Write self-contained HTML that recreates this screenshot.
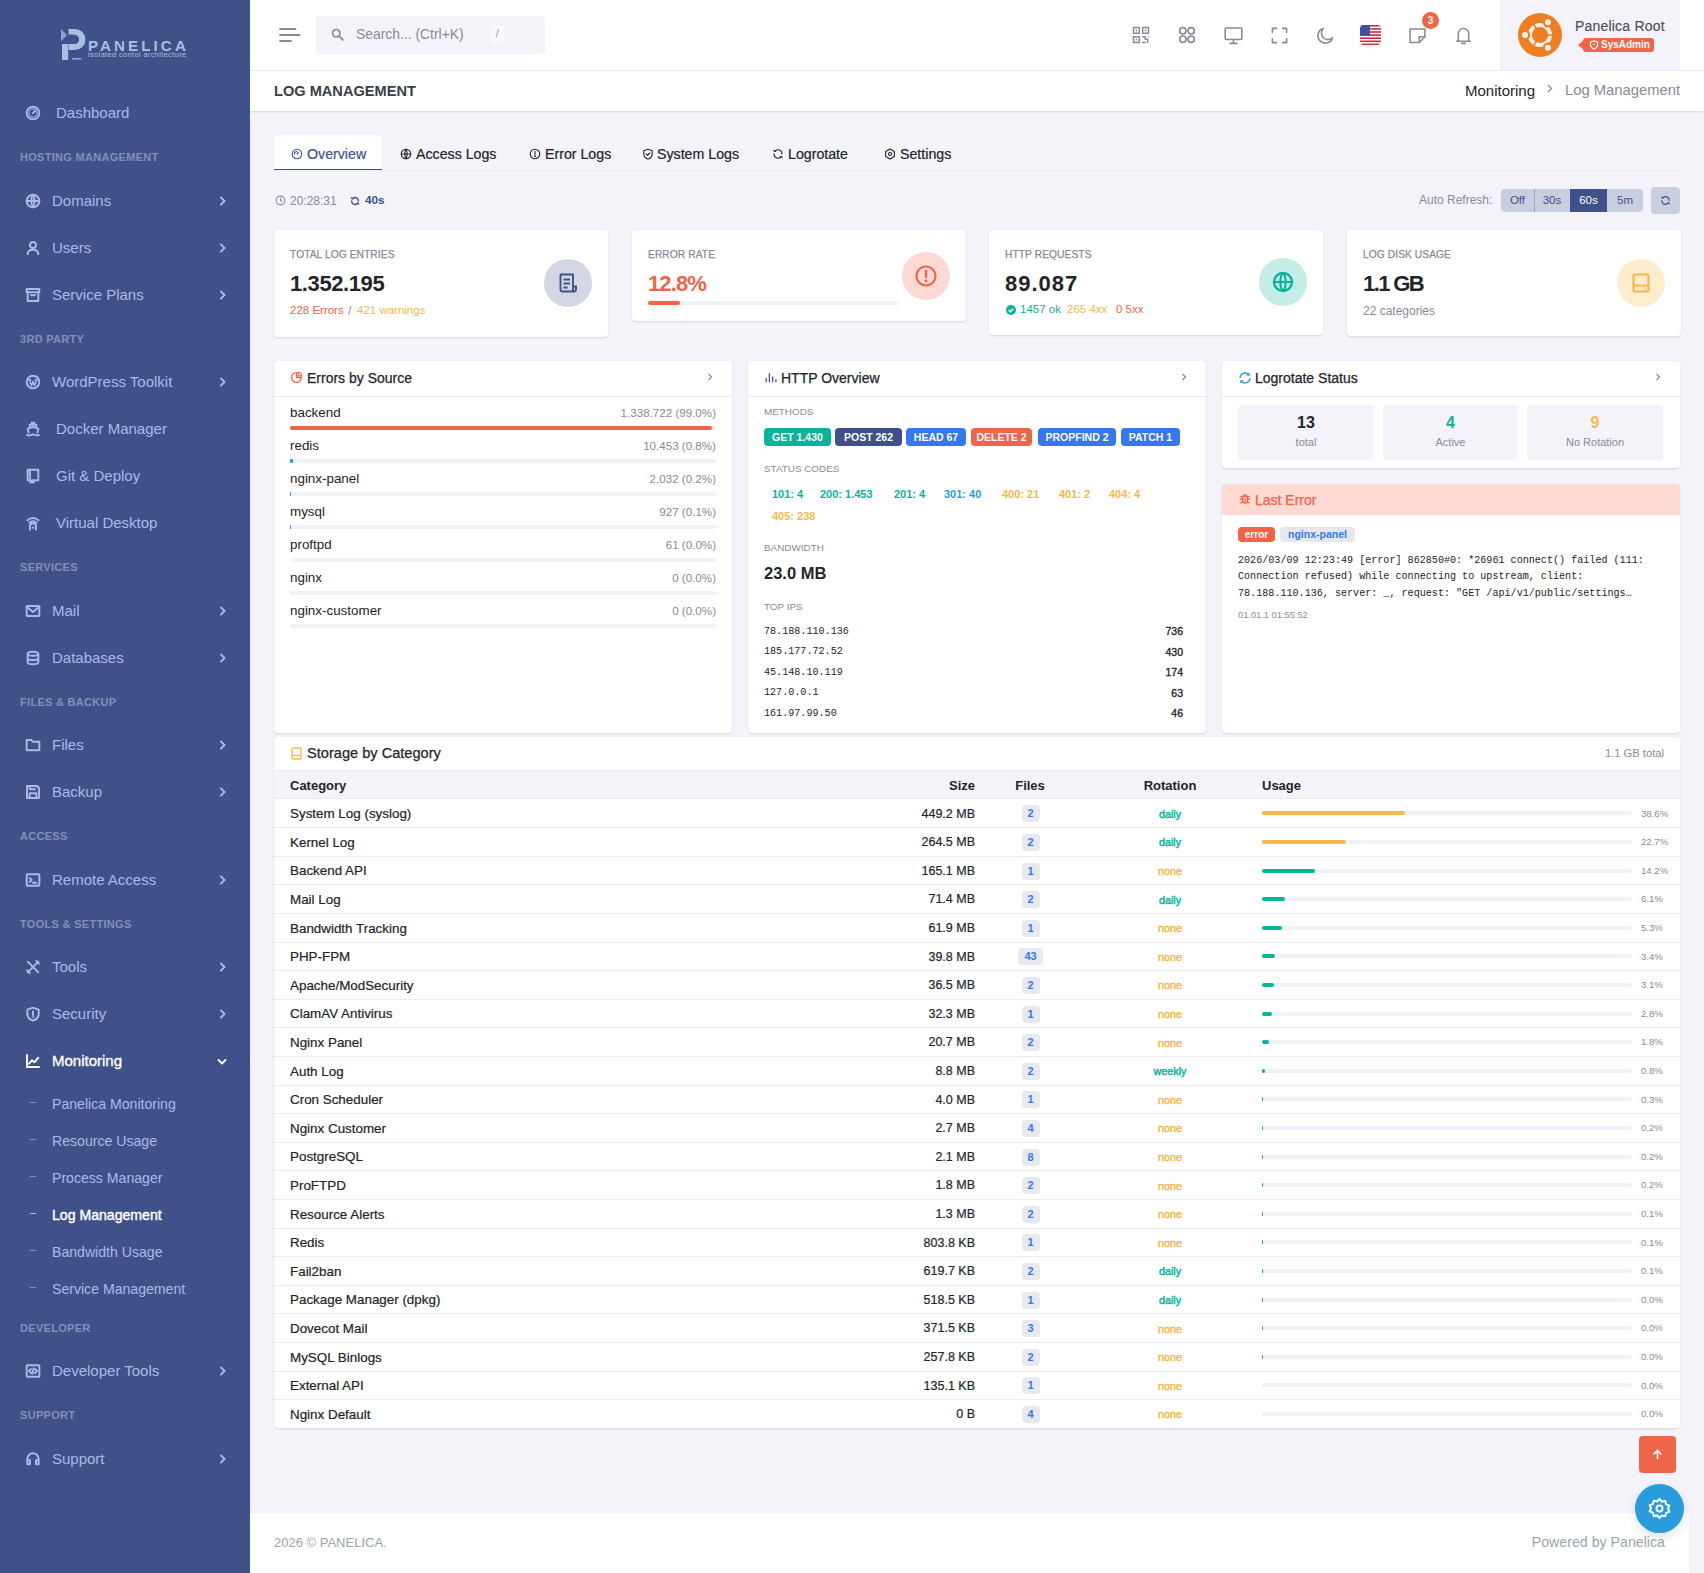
<!DOCTYPE html><html><head><meta charset="utf-8"><title>Log Management</title><style>*{box-sizing:border-box;margin:0;padding:0}
html,body{width:1704px;height:1573px;overflow:hidden}
body{font-family:"Liberation Sans",sans-serif;background:#f3f3f9;color:#212529;position:relative;font-size:13px}
svg{display:block}
.abs{position:absolute}
.t{position:absolute;white-space:nowrap;line-height:1}
/* sidebar */
#sb{position:absolute;left:0;top:0;width:250px;height:1573px;background:#405189}
.mi{position:absolute;left:0;width:250px;height:20px;color:#abb9e8;font-size:15px}
.mi .ic{position:absolute;left:25px;top:2px;width:16px;height:16px}
.mi .lb{position:absolute;top:2px;line-height:16px;white-space:nowrap}
.mi .ch{position:absolute;left:219px;top:4.5px;width:8px;height:10px}
.mt{position:absolute;left:20px;color:#838fb9;font-size:11px;font-weight:bold;letter-spacing:.3px;line-height:1;white-space:nowrap}
.si{position:absolute;left:0;width:250px;color:#abb9e8;font-size:14.1px;line-height:16px;white-space:nowrap}
.si .d{position:absolute;left:30px;top:5.5px;width:6px;height:1.3px;background:#abb9e8;opacity:.6}
.si span{position:absolute;left:52px;top:0}
/* header */
#hd{position:absolute;left:250px;top:0;width:1454px;height:71px;background:#fff;border-bottom:1px solid #eceef1}
#pt{position:absolute;left:250px;top:71px;width:1454px;height:40px;background:#fff;box-shadow:0 1px 2px rgba(56,65,74,.15)}
.card{position:absolute;background:#fff;border-radius:4px;box-shadow:0 1px 2px rgba(56,65,74,.15)}
.lbl{position:absolute;font-size:11px;color:#878a99;white-space:nowrap;line-height:1;text-transform:uppercase}
.bar{position:absolute;height:4px;border-radius:2px;background:#eff2f7}
.bar i{position:absolute;left:0;top:0;height:4px;border-radius:2px;display:block}
.bdg{position:absolute;height:18px;border-radius:4px;color:#fff;font-size:11px;font-weight:bold;line-height:18px;text-align:center;white-space:nowrap}
.mono{font-family:"Liberation Mono",monospace}
</style></head><body><div id="sb"><div class="abs" style="left:50px;top:20px;width:150px;height:50px">
<svg width="150" height="50" viewBox="50 20 150 50">
<path d="M61 29l6 6-6 6.5z" fill="#8d9fd6"/>
<rect x="62" y="44" width="6.2" height="16" fill="#a5c0e0"/>
<path d="M68.5 29h6.5a10.5 10.5 0 0 1 0 21h-6.5v-6h6a4.6 4.6 0 0 0 0-9.2h-1v-0.3h-5z" fill="#a5c0e0"/>
<rect x="72" y="58" width="9.5" height="1.5" fill="#a5c0e0" opacity=".8"/>
</svg>
<div class="t" style="left:38px;top:18px;font-size:15.2px;font-weight:bold;color:#a5c0e0;letter-spacing:3.05px">PANELICA</div>
<div class="t" style="left:38px;top:30.5px;font-size:7.3px;color:#a5c0e0;letter-spacing:.42px">isolated contol architecture</div>
</div><div class="mi" style="top:103px;color:#abb9e8"><div class="ic"><svg width="16" height="16" viewBox="0 0 24 24" fill="none" stroke="currentColor" stroke-width="2.9" stroke-linecap="round" stroke-linejoin="round" ><circle cx="12" cy="12" r="9.5"/><circle cx="12" cy="12" r="6" stroke-width="1.6"/><path d="M12 12l3.5-3.5"/></svg></div><div class="lb" style="left:56px">Dashboard</div></div><div class="mt" style="top:152px">HOSTING MANAGEMENT</div><div class="mi" style="top:191px;color:#abb9e8"><div class="ic"><svg width="16" height="16" viewBox="0 0 24 24" fill="none" stroke="currentColor" stroke-width="2.9" stroke-linecap="round" stroke-linejoin="round" ><circle cx="12" cy="12" r="9.5"/><path d="M2.5 12h19M12 2.5c3 3 3 16 0 19M12 2.5c-3 3-3 16 0 19"/></svg></div><div class="lb" style="left:52px">Domains</div><div class="ch"><svg width="8" height="10" viewBox="0 0 8 10"><path d="M2 1.5l3.5 3.5L2 8.5" fill="none" stroke="#abb9e8" stroke-width="1.9" stroke-linecap="round"/></svg></div></div><div class="mi" style="top:238px;color:#abb9e8"><div class="ic"><svg width="16" height="16" viewBox="0 0 24 24" fill="none" stroke="currentColor" stroke-width="2.9" stroke-linecap="round" stroke-linejoin="round" ><circle cx="12" cy="7.5" r="4.5"/><path d="M4 21.5c0-4.5 3.5-7 8-7s8 2.5 8 7"/></svg></div><div class="lb" style="left:52px">Users</div><div class="ch"><svg width="8" height="10" viewBox="0 0 8 10"><path d="M2 1.5l3.5 3.5L2 8.5" fill="none" stroke="#abb9e8" stroke-width="1.9" stroke-linecap="round"/></svg></div></div><div class="mi" style="top:285px;color:#abb9e8"><div class="ic"><svg width="16" height="16" viewBox="0 0 24 24" fill="none" stroke="currentColor" stroke-width="2.9" stroke-linecap="round" stroke-linejoin="round" ><rect x="2.5" y="3" width="19" height="5" /><path d="M4 8v13h16V8M9 12.5h6"/></svg></div><div class="lb" style="left:52px">Service Plans</div><div class="ch"><svg width="8" height="10" viewBox="0 0 8 10"><path d="M2 1.5l3.5 3.5L2 8.5" fill="none" stroke="#abb9e8" stroke-width="1.9" stroke-linecap="round"/></svg></div></div><div class="mt" style="top:334px">3RD PARTY</div><div class="mi" style="top:372px;color:#abb9e8"><div class="ic"><svg width="16" height="16" viewBox="0 0 24 24" fill="none" stroke="currentColor" stroke-width="2.9" stroke-linecap="round" stroke-linejoin="round" ><circle cx="12" cy="12" r="9.5"/><path d="M6.5 8.5l3.2 9 2.3-6.5 2.3 6.5 3.2-9M5.5 8.5h3M15.5 8.5h3" stroke-width="2.2"/></svg></div><div class="lb" style="left:52px">WordPress Toolkit</div><div class="ch"><svg width="8" height="10" viewBox="0 0 8 10"><path d="M2 1.5l3.5 3.5L2 8.5" fill="none" stroke="#abb9e8" stroke-width="1.9" stroke-linecap="round"/></svg></div></div><div class="mi" style="top:419px;color:#abb9e8"><div class="ic"><svg width="16" height="16" viewBox="0 0 24 24" fill="none" stroke="currentColor" stroke-width="2.9" stroke-linecap="round" stroke-linejoin="round" ><path d="M3 21c2 1 4 1 6 0s4-1 6 0 4 1 6 0M5.5 17.5L4 11.5l8-2.5 8 2.5-1.5 6M7 10V5.5h10V10M10 5.5V2.5h4v3"/></svg></div><div class="lb" style="left:56px">Docker Manager</div></div><div class="mi" style="top:466px;color:#abb9e8"><div class="ic"><svg width="16" height="16" viewBox="0 0 24 24" fill="none" stroke="currentColor" stroke-width="2.9" stroke-linecap="round" stroke-linejoin="round" ><path d="M4 2.5h16v16H4zM7.5 5v2M7.5 9v2M7.5 13v2M8 18.5v3.5l2.5-1.5 2.5 1.5v-3.5"/></svg></div><div class="lb" style="left:56px">Git &amp; Deploy</div></div><div class="mi" style="top:513px;color:#abb9e8"><div class="ic"><svg width="16" height="16" viewBox="0 0 24 24" fill="none" stroke="currentColor" stroke-width="2.9" stroke-linecap="round" stroke-linejoin="round" ><path d="M3.5 8a12 12 0 0 1 17 0M6.5 11.5a8 8 0 0 1 11 0M7.5 22v-5a4.5 4.5 0 0 1 9 0v5M11.5 19h1"/></svg></div><div class="lb" style="left:56px">Virtual Desktop</div></div><div class="mt" style="top:562px">SERVICES</div><div class="mi" style="top:601px;color:#abb9e8"><div class="ic"><svg width="16" height="16" viewBox="0 0 24 24" fill="none" stroke="currentColor" stroke-width="2.9" stroke-linecap="round" stroke-linejoin="round" ><rect x="2.5" y="4.5" width="19" height="15" rx="1"/><path d="M2.5 5.5l9.5 8 9.5-8"/></svg></div><div class="lb" style="left:52px">Mail</div><div class="ch"><svg width="8" height="10" viewBox="0 0 8 10"><path d="M2 1.5l3.5 3.5L2 8.5" fill="none" stroke="#abb9e8" stroke-width="1.9" stroke-linecap="round"/></svg></div></div><div class="mi" style="top:648px;color:#abb9e8"><div class="ic"><svg width="16" height="16" viewBox="0 0 24 24" fill="none" stroke="currentColor" stroke-width="2.9" stroke-linecap="round" stroke-linejoin="round" ><ellipse cx="12" cy="5.5" rx="8" ry="3"/><path d="M4 5.5v13c0 1.7 3.6 3 8 3s8-1.3 8-3v-13M4 12c0 1.7 3.6 3 8 3s8-1.3 8-3"/></svg></div><div class="lb" style="left:52px">Databases</div><div class="ch"><svg width="8" height="10" viewBox="0 0 8 10"><path d="M2 1.5l3.5 3.5L2 8.5" fill="none" stroke="#abb9e8" stroke-width="1.9" stroke-linecap="round"/></svg></div></div><div class="mt" style="top:697px">FILES &amp; BACKUP</div><div class="mi" style="top:735px;color:#abb9e8"><div class="ic"><svg width="16" height="16" viewBox="0 0 24 24" fill="none" stroke="currentColor" stroke-width="2.9" stroke-linecap="round" stroke-linejoin="round" ><path d="M2.5 4.5h7l2 2.5h10v13h-19z"/></svg></div><div class="lb" style="left:52px">Files</div><div class="ch"><svg width="8" height="10" viewBox="0 0 8 10"><path d="M2 1.5l3.5 3.5L2 8.5" fill="none" stroke="#abb9e8" stroke-width="1.9" stroke-linecap="round"/></svg></div></div><div class="mi" style="top:782px;color:#abb9e8"><div class="ic"><svg width="16" height="16" viewBox="0 0 24 24" fill="none" stroke="currentColor" stroke-width="2.9" stroke-linecap="round" stroke-linejoin="round" ><path d="M3 3h15l3 3v15H3zM7 21v-7h10v7M7 3v5h8"/></svg></div><div class="lb" style="left:52px">Backup</div><div class="ch"><svg width="8" height="10" viewBox="0 0 8 10"><path d="M2 1.5l3.5 3.5L2 8.5" fill="none" stroke="#abb9e8" stroke-width="1.9" stroke-linecap="round"/></svg></div></div><div class="mt" style="top:831px">ACCESS</div><div class="mi" style="top:870px;color:#abb9e8"><div class="ic"><svg width="16" height="16" viewBox="0 0 24 24" fill="none" stroke="currentColor" stroke-width="2.9" stroke-linecap="round" stroke-linejoin="round" ><rect x="2.5" y="3.5" width="19" height="17" rx="1"/><path d="M7 9l3 3-3 3M12 16h5"/></svg></div><div class="lb" style="left:52px">Remote Access</div><div class="ch"><svg width="8" height="10" viewBox="0 0 8 10"><path d="M2 1.5l3.5 3.5L2 8.5" fill="none" stroke="#abb9e8" stroke-width="1.9" stroke-linecap="round"/></svg></div></div><div class="mt" style="top:919px">TOOLS &amp; SETTINGS</div><div class="mi" style="top:957px;color:#abb9e8"><div class="ic"><svg width="16" height="16" viewBox="0 0 24 24" fill="none" stroke="currentColor" stroke-width="2.9" stroke-linecap="round" stroke-linejoin="round" ><path d="M4 4l16 16M4 20l7-7M14 10l6-6M17 3l4 4M3 17l4 4"/></svg></div><div class="lb" style="left:52px">Tools</div><div class="ch"><svg width="8" height="10" viewBox="0 0 8 10"><path d="M2 1.5l3.5 3.5L2 8.5" fill="none" stroke="#abb9e8" stroke-width="1.9" stroke-linecap="round"/></svg></div></div><div class="mi" style="top:1004px;color:#abb9e8"><div class="ic"><svg width="16" height="16" viewBox="0 0 24 24" fill="none" stroke="currentColor" stroke-width="2.9" stroke-linecap="round" stroke-linejoin="round" ><path d="M12 2.5l8.5 3v6c0 5-3.5 9-8.5 10.5C7 20.5 3.5 16.5 3.5 11.5v-6z"/><path d="M12 8v5"/><circle cx="12" cy="16" r=".6"/></svg></div><div class="lb" style="left:52px">Security</div><div class="ch"><svg width="8" height="10" viewBox="0 0 8 10"><path d="M2 1.5l3.5 3.5L2 8.5" fill="none" stroke="#abb9e8" stroke-width="1.9" stroke-linecap="round"/></svg></div></div><div class="mi" style="top:1051px;color:#fff;-webkit-text-stroke:.35px #fff"><div class="ic"><svg width="16" height="16" viewBox="0 0 24 24" fill="none" stroke="currentColor" stroke-width="2.9" stroke-linecap="round" stroke-linejoin="round" ><path d="M3 3v18h18M6 16l4.5-5 3.5 3 6-7"/></svg></div><div class="lb" style="left:52px">Monitoring</div><div class="ch" style="left:217px;top:7px"><svg width="10" height="8" viewBox="0 0 10 8"><path d="M1.5 2l3.5 3.5L8.5 2" fill="none" stroke="#fff" stroke-width="1.8" stroke-linecap="round"/></svg></div></div><div class="si" style="top:1096px;color:#abb9e8;font-weight:normal;"><div class="d" style="background:#abb9e8"></div><span>Panelica Monitoring</span></div><div class="si" style="top:1133px;color:#abb9e8;font-weight:normal;"><div class="d" style="background:#abb9e8"></div><span>Resource Usage</span></div><div class="si" style="top:1170px;color:#abb9e8;font-weight:normal;"><div class="d" style="background:#abb9e8"></div><span>Process Manager</span></div><div class="si" style="top:1207px;color:#fff;font-weight:normal;-webkit-text-stroke:.4px #fff"><div class="d" style="background:#fff"></div><span>Log Management</span></div><div class="si" style="top:1244px;color:#abb9e8;font-weight:normal;"><div class="d" style="background:#abb9e8"></div><span>Bandwidth Usage</span></div><div class="si" style="top:1281px;color:#abb9e8;font-weight:normal;"><div class="d" style="background:#abb9e8"></div><span>Service Management</span></div><div class="mt" style="top:1323px">DEVELOPER</div><div class="mi" style="top:1361px;color:#abb9e8"><div class="ic"><svg width="16" height="16" viewBox="0 0 24 24" fill="none" stroke="currentColor" stroke-width="2.9" stroke-linecap="round" stroke-linejoin="round" ><rect x="2.5" y="3.5" width="19" height="17" rx="1"/><path d="M9 9l-3 3 3 3M15 9l3 3-3 3M13 8l-2 8"/></svg></div><div class="lb" style="left:52px">Developer Tools</div><div class="ch"><svg width="8" height="10" viewBox="0 0 8 10"><path d="M2 1.5l3.5 3.5L2 8.5" fill="none" stroke="#abb9e8" stroke-width="1.9" stroke-linecap="round"/></svg></div></div><div class="mt" style="top:1410px">SUPPORT</div><div class="mi" style="top:1449px;color:#abb9e8"><div class="ic"><svg width="16" height="16" viewBox="0 0 24 24" fill="none" stroke="currentColor" stroke-width="2.9" stroke-linecap="round" stroke-linejoin="round" ><path d="M3.5 18v-6a8.5 8.5 0 0 1 17 0v6M3.5 14h4v6h-4zM16.5 14h4v6h-4z"/></svg></div><div class="lb" style="left:52px">Support</div><div class="ch"><svg width="8" height="10" viewBox="0 0 8 10"><path d="M2 1.5l3.5 3.5L2 8.5" fill="none" stroke="#abb9e8" stroke-width="1.9" stroke-linecap="round"/></svg></div></div></div><div id="hd"></div><div id="pt"></div><div class="abs" style="left:279px;top:27px"><svg width="22" height="16" viewBox="0 0 22 16"><path d="M1 2h15.5M1 8h19.5M1 14h11" stroke="#878a99" stroke-width="1.8" stroke-linecap="round"/></svg></div><div class="abs" style="left:316px;top:16px;width:229px;height:38px;background:#f3f3f9;border-radius:4px"></div><div class="abs" style="left:330px;top:27px"><svg width="15" height="15" viewBox="0 0 24 24"><circle cx="10" cy="10" r="6" fill="none" stroke="#878a99" stroke-width="2.6"/><path d="M14.5 14.5l6 6" stroke="#878a99" stroke-width="2.8" stroke-linecap="round"/></svg></div><div class="t" style="left:356px;top:28.1px;font-size:13.9px;color:#878a99;font-weight:normal;">Search... (Ctrl+K)</div><div class="abs" style="left:491px;top:25px;width:13px;height:19px;background:#f9f9fc;border-radius:3px"></div><div class="t" style="left:497.5px;transform:translateX(-50%);top:29.0px;font-size:10px;color:#878a99;font-weight:normal;">/</div><div class="abs" style="left:1131.0px;top:25.0px;width:20px;height:20px"><svg width="20" height="20" viewBox="0 0 24 24" fill="none" stroke="#878a99" stroke-width="1.8" stroke-linecap="round" stroke-linejoin="round" ><rect x="3" y="3" width="7" height="7"/><rect x="14" y="3" width="7" height="7"/><rect x="3" y="14" width="7" height="7"/><rect x="5.5" y="5.5" width="2" height="2" fill="#878a99" stroke="none"/><rect x="16.5" y="5.5" width="2" height="2" fill="#878a99" stroke="none"/><rect x="5.5" y="16.5" width="2" height="2" fill="#878a99" stroke="none"/><path d="M14 14h3v3M21 14v0M14 21h3M20 17v4M17 17h3"/></svg></div><div class="abs" style="left:1177.0px;top:25.0px;width:20px;height:20px"><svg width="20" height="20" viewBox="0 0 24 24" fill="none" stroke="#878a99" stroke-width="2" stroke-linecap="round" stroke-linejoin="round" ><circle cx="7" cy="7" r="3.8"/><circle cx="17" cy="7" r="3.8"/><circle cx="7" cy="17" r="3.8"/><circle cx="17" cy="17" r="3.8"/></svg></div><div class="abs" style="left:1222.5px;top:24.5px;width:21px;height:21px"><svg width="21" height="21" viewBox="0 0 24 24" fill="none" stroke="#878a99" stroke-width="1.8" stroke-linecap="round" stroke-linejoin="round" ><rect x="2.5" y="3.5" width="19" height="13" rx="1"/><path d="M12 16.5v4M8 21h8"/></svg></div><div class="abs" style="left:1269.5px;top:25.5px;width:19px;height:19px"><svg width="19" height="19" viewBox="0 0 24 24" fill="none" stroke="#878a99" stroke-width="2" stroke-linecap="round" stroke-linejoin="round" ><path d="M3 8V3h5M16 3h5v5M21 16v5h-5M8 21H3v-5"/></svg></div><div class="abs" style="left:1314.5px;top:24.5px;width:21px;height:21px"><svg width="21" height="21" viewBox="0 0 24 24" fill="none" stroke="#878a99" stroke-width="1.8" stroke-linecap="round" stroke-linejoin="round" ><path d="M20 14.5A8.5 8.5 0 1 1 9.5 4 7 7 0 0 0 20 14.5z"/></svg></div><div class="abs" style="left:1360px;top:25px;width:21px;height:20px;border-radius:4px;overflow:hidden">
<svg width="21" height="20" viewBox="0 0 21 20"><rect width="21" height="20" fill="#fff"/>
<rect y="0" width="21" height="1.6" fill="#d8263a"/><rect y="3.1" width="21" height="1.6" fill="#d8263a"/><rect y="6.2" width="21" height="1.6" fill="#d8263a"/><rect y="9.3" width="21" height="1.6" fill="#d8263a"/><rect y="12.4" width="21" height="1.6" fill="#d8263a"/><rect y="15.5" width="21" height="1.6" fill="#d8263a"/><rect y="18.6" width="21" height="1.6" fill="#d8263a"/>
<rect width="10" height="10.5" fill="#3d4fa8"/></svg></div><div class="abs" style="left:1406.5px;top:24.5px;width:21px;height:21px"><svg width="21" height="21" viewBox="0 0 24 24" fill="none" stroke="#878a99" stroke-width="1.8" stroke-linecap="round" stroke-linejoin="round" ><path d="M3.5 4.5h17v9l-6.5 6.5h-10.5z"/><path d="M14 20v-6.5h6.5"/></svg></div><div class="abs" style="left:1422px;top:12px;width:17px;height:17px;border-radius:50%;background:#f06548;color:#fff;font-size:10px;font-weight:bold;text-align:center;line-height:17px">3</div><div class="abs" style="left:1452.5px;top:24.5px;width:21px;height:21px"><svg width="21" height="21" viewBox="0 0 24 24" fill="none" stroke="#878a99" stroke-width="1.8" stroke-linecap="round" stroke-linejoin="round" ><path d="M6 17V10a6 6 0 0 1 12 0v7l1.5 1.5h-15zM10 21h4"/></svg></div><div class="abs" style="left:1500px;top:0;width:180px;height:70px;background:#f3f3f9"></div><div class="abs" style="left:1517.5px;top:13px;width:44px;height:44px;border-radius:50%;background:#f07d22"><svg width="44" height="44" viewBox="0 0 44 44">
<circle cx="22" cy="22" r="10" fill="none" stroke="#fdf3ea" stroke-width="4"/><line x1="22" y1="22" x2="15.00" y2="34.12" stroke="#f07d22" stroke-width="1.6"/><line x1="22" y1="22" x2="36.00" y2="22.00" stroke="#f07d22" stroke-width="1.6"/><line x1="22" y1="22" x2="15.00" y2="9.88" stroke="#f07d22" stroke-width="1.6"/><circle cx="7.00" cy="22.00" r="5.2" fill="#f07d22"/><circle cx="29.95" cy="9.28" r="5.2" fill="#f07d22"/><circle cx="29.95" cy="34.72" r="5.2" fill="#f07d22"/><circle cx="7.00" cy="22.00" r="3" fill="#fdf3ea"/><circle cx="29.95" cy="9.28" r="3" fill="#fdf3ea"/><circle cx="29.95" cy="34.72" r="3" fill="#fdf3ea"/></svg></div><div class="t" style="left:1575px;top:18.5px;font-size:14px;color:#495057;font-weight:normal;letter-spacing:.2px;-webkit-text-stroke:.15px #495057">Panelica Root</div><div class="abs" style="left:1583px;top:38px;width:71px;height:14px;background:#f06548;border-radius:3px"></div><div class="abs" style="left:1578px;top:40px;width:0;height:0;border-top:5px solid transparent;border-bottom:5px solid transparent;border-right:6px solid #f06548"></div><div class="abs" style="left:1589px;top:40px"><svg width="10" height="10" viewBox="0 0 24 24"><path d="M12 2l8.5 3v6c0 5-3.5 9-8.5 11C7 20 3.5 16 3.5 11V5z" fill="none" stroke="#fff" stroke-width="3"/><circle cx="12" cy="10.5" r="2" fill="#fff"/></svg></div><div class="t" style="left:1601px;top:40.0px;font-size:10px;color:#fff;font-weight:bold;">SysAdmin</div><div class="t" style="left:274px;top:83.7px;font-size:14.6px;color:#3a3f45;font-weight:bold;">LOG MANAGEMENT</div><div class="t" style="left:1465px;top:82.5px;font-size:15px;color:#212529;font-weight:normal;">Monitoring</div><div class="abs" style="left:1546px;top:84px"><svg width="8" height="9" viewBox="0 0 8 9"><path d="M2 1l3.5 3.5L2 8" fill="none" stroke="#878a99" stroke-width="1.3"/></svg></div><div class="t" style="left:1565px;top:82.6px;font-size:14.8px;color:#878a99;font-weight:normal;">Log Management</div><div class="abs" style="left:274px;top:170px;width:1406px;height:1px;background:#e9ebec"></div><div class="abs" style="left:274px;top:135px;width:108px;height:35px;background:#fff;border-radius:4px 4px 0 0;border-bottom:1.5px solid #405189"></div><div class="abs" style="left:291px;top:148px;color:#405189"><svg width="12" height="12" viewBox="0 0 24 24" fill="none" stroke="currentColor" stroke-width="2.2" stroke-linecap="round" stroke-linejoin="round" ><circle cx="12" cy="12" r="9.5"/><path d="M12 12l3-3"/><path d="M7 12a5 5 0 0 1 5-5"/></svg></div><div class="t" style="left:307px;top:146.9px;font-size:14.2px;color:#405189;font-weight:normal;-webkit-text-stroke:.2px #405189">Overview</div><div class="abs" style="left:400px;top:148px;color:#212529"><svg width="12" height="12" viewBox="0 0 24 24" fill="none" stroke="currentColor" stroke-width="2.2" stroke-linecap="round" stroke-linejoin="round" ><circle cx="12" cy="12" r="9.5"/><path d="M2.5 12h19M12 2.5c3 3 3 16 0 19M12 2.5c-3 3-3 16 0 19"/></svg></div><div class="t" style="left:416px;top:146.9px;font-size:14.2px;color:#212529;font-weight:normal;-webkit-text-stroke:.2px #212529">Access Logs</div><div class="abs" style="left:529px;top:148px;color:#212529"><svg width="12" height="12" viewBox="0 0 24 24" fill="none" stroke="currentColor" stroke-width="2.2" stroke-linecap="round" stroke-linejoin="round" ><circle cx="12" cy="12" r="9.5"/><path d="M12 7v6"/><circle cx="12" cy="16.5" r=".8" fill="currentColor"/></svg></div><div class="t" style="left:545px;top:146.9px;font-size:14.2px;color:#212529;font-weight:normal;-webkit-text-stroke:.2px #212529">Error Logs</div><div class="abs" style="left:642px;top:148px;color:#212529"><svg width="12" height="12" viewBox="0 0 24 24" fill="none" stroke="currentColor" stroke-width="2.2" stroke-linecap="round" stroke-linejoin="round" ><path d="M12 2.5l8.5 3v6c0 5-3.5 9-8.5 10.5C7 20.5 3.5 16.5 3.5 11.5v-6z"/><path d="M8.5 12l2.5 2.5 4.5-4.5"/></svg></div><div class="t" style="left:657px;top:146.9px;font-size:14.2px;color:#212529;font-weight:normal;-webkit-text-stroke:.2px #212529">System Logs</div><div class="abs" style="left:772px;top:148px;color:#212529"><svg width="12" height="12" viewBox="0 0 24 24" fill="none" stroke="currentColor" stroke-width="2.2" stroke-linecap="round" stroke-linejoin="round" ><path d="M5.5 7A8 8 0 0 1 20 12M18.5 17A8 8 0 0 1 4 12"/><path d="M3.5 4.5l2 2.5 2.7-1.6M20.5 19.5l-2-2.5-2.7 1.6"/></svg></div><div class="t" style="left:788px;top:146.9px;font-size:14.2px;color:#212529;font-weight:normal;-webkit-text-stroke:.2px #212529">Logrotate</div><div class="abs" style="left:884px;top:148px;color:#212529"><svg width="12" height="12" viewBox="0 0 24 24" fill="none" stroke="currentColor" stroke-width="2.2" stroke-linecap="round" stroke-linejoin="round" ><circle cx="12" cy="12" r="3"/><path d="M12 2l8.7 5v10L12 22l-8.7-5V7z"/></svg></div><div class="t" style="left:900px;top:146.9px;font-size:14.2px;color:#212529;font-weight:normal;-webkit-text-stroke:.2px #212529">Settings</div><div class="abs" style="left:274.5px;top:195px;color:#878a99"><svg width="11" height="11" viewBox="0 0 24 24" fill="none" stroke="currentColor" stroke-width="2.3" stroke-linecap="round" stroke-linejoin="round" ><circle cx="12" cy="12" r="9.5"/><path d="M12 7v5l3 2"/></svg></div><div class="t" style="left:290px;top:195.0px;font-size:12px;color:#878a99;font-weight:normal;">20:28:31</div><div class="abs" style="left:350px;top:195.5px;color:#405189"><svg width="10" height="10" viewBox="0 0 24 24" fill="none" stroke="currentColor" stroke-width="3.2" stroke-linecap="round" stroke-linejoin="round" ><path d="M5.5 7A8 8 0 0 1 20 12M18.5 17A8 8 0 0 1 4 12"/><path d="M3.5 4.5l2 2.5 2.7-1.6M20.5 19.5l-2-2.5-2.7 1.6"/></svg></div><div class="t" style="left:365px;top:195.1px;font-size:11.8px;color:#405189;font-weight:bold;">40s</div><div class="t" style="left:1419px;top:194.0px;font-size:12px;color:#878a99;font-weight:normal;">Auto Refresh:</div><div class="abs" style="left:1501px;top:189px;width:142px;height:23px;background:#c9cfe1;border-radius:4px;overflow:hidden"><div class="abs" style="left:33px;top:0;width:1px;height:23px;background:#9aa3bf"></div><div class="abs" style="left:69px;top:0;width:37px;height:23px;background:#405189"></div></div><div class="t" style="left:1517.5px;transform:translateX(-50%);top:194.8px;font-size:11.5px;color:#405189;font-weight:normal;">Off</div><div class="t" style="left:1552px;transform:translateX(-50%);top:194.8px;font-size:11.5px;color:#405189;font-weight:normal;">30s</div><div class="t" style="left:1588.5px;transform:translateX(-50%);top:194.8px;font-size:11.5px;color:#fff;font-weight:normal;">60s</div><div class="t" style="left:1625px;transform:translateX(-50%);top:194.8px;font-size:11.5px;color:#405189;font-weight:normal;">5m</div><div class="abs" style="left:1651px;top:187px;width:29px;height:27px;background:#c9cfe1;border-radius:4px"></div><div class="abs" style="left:1660px;top:195px;color:#405189"><svg width="11" height="11" viewBox="0 0 24 24" fill="none" stroke="currentColor" stroke-width="2.4" stroke-linecap="round" stroke-linejoin="round" ><path d="M5.5 7A8 8 0 0 1 20 12M18.5 17A8 8 0 0 1 4 12"/><path d="M3.5 4.5l2 2.5 2.7-1.6M20.5 19.5l-2-2.5-2.7 1.6"/></svg></div><div class="card" style="left:274px;top:230px;width:334px;height:107px"></div><div class="t" style="left:290px;top:249.9px;font-size:10.2px;color:#878a99;font-weight:normal;letter-spacing:.1px;-webkit-text-stroke:.25px #878a99">TOTAL LOG ENTRIES</div><div class="t" style="left:290px;top:273.0px;font-size:22px;color:#212529;font-weight:bold;letter-spacing:-0.4px">1.352.195</div><div class="abs" style="left:544px;top:259px;width:48px;height:48px;border-radius:50%;background:#d3d7e4"><svg width="48" height="48" viewBox="0 0 48 48"><path d="M16.5 15.5h12.5v17h-11a1.5 1.5 0 0 1-1.5-1.5z" fill="none" stroke="#405189" stroke-width="1.9" stroke-linejoin="round"/><path d="M19.5 20.5h6.5M19.5 24.5h6.5M19.5 28.5h4" stroke="#405189" stroke-width="1.9"/><path d="M29 27.5h3v3a2 2 0 0 1-2 2h-1" fill="none" stroke="#405189" stroke-width="1.9"/></svg></div><div class="t" style="left:290px;top:305.2px;font-size:11.5px;color:#f06548;font-weight:normal;">228 Errors</div><div class="t" style="left:348px;top:305.0px;font-size:12px;color:#878a99;font-weight:normal;">/</div><div class="t" style="left:357px;top:305.2px;font-size:11.5px;color:#f7b84b;font-weight:normal;">421 warnings</div><div class="card" style="left:632px;top:230px;width:334px;height:91px"></div><div class="t" style="left:648px;top:249.9px;font-size:10.2px;color:#878a99;font-weight:normal;letter-spacing:.1px;-webkit-text-stroke:.25px #878a99">ERROR RATE</div><div class="t" style="left:648px;top:273.0px;font-size:22px;color:#f06548;font-weight:bold;letter-spacing:-0.9px">12.8%</div><div class="abs" style="left:902px;top:252px;width:48px;height:48px;border-radius:50%;background:#fcd9d2"><svg width="48" height="48" viewBox="0 0 48 48"><circle cx="24" cy="24" r="9.5" fill="none" stroke="#f06548" stroke-width="2.2"/><path d="M24 19v6" stroke="#f06548" stroke-width="2.4" stroke-linecap="round"/><circle cx="24" cy="29" r="1.4" fill="#f06548"/></svg></div><div class="abs" style="left:648px;top:301px;width:252px;height:4px;background:#eff2f7;border-radius:2px"><div class="abs" style="left:0;top:0;width:32px;height:4px;background:#f06548;border-radius:2px"></div></div><div class="card" style="left:989px;top:230px;width:334px;height:105px"></div><div class="t" style="left:1005px;top:249.9px;font-size:10.2px;color:#878a99;font-weight:normal;letter-spacing:.1px;-webkit-text-stroke:.25px #878a99">HTTP REQUESTS</div><div class="t" style="left:1005px;top:273.0px;font-size:22px;color:#212529;font-weight:bold;letter-spacing:1.0px">89.087</div><div class="abs" style="left:1259px;top:258px;width:48px;height:48px;border-radius:50%;background:#c3ede6"><svg width="48" height="48" viewBox="0 0 48 48"><circle cx="24" cy="24" r="9" fill="none" stroke="#0ab39c" stroke-width="2.4"/><path d="M15 24h18M24 15c3.5 3 3.5 15 0 18M24 15c-3.5 3-3.5 15 0 18" fill="none" stroke="#0ab39c" stroke-width="2.2"/></svg></div><div class="abs" style="left:1005.5px;top:304.5px;width:10px;height:10px;border-radius:50%;background:#0ab39c"><svg width="10" height="10" viewBox="0 0 10 10"><path d="M2.7 5.1l1.6 1.6L7.3 3.7" fill="none" stroke="#fff" stroke-width="1.4"/></svg></div><div class="t" style="left:1020px;top:304.2px;font-size:11.5px;color:#0ab39c;font-weight:normal;">1457 ok</div><div class="t" style="left:1067px;top:304.2px;font-size:11.5px;color:#f7b84b;font-weight:normal;">265 4xx</div><div class="t" style="left:1116px;top:304.2px;font-size:11.5px;color:#f06548;font-weight:normal;">0 5xx</div><div class="card" style="left:1347px;top:230px;width:334px;height:106px"></div><div class="t" style="left:1363px;top:249.9px;font-size:10.2px;color:#878a99;font-weight:normal;letter-spacing:.1px;-webkit-text-stroke:.25px #878a99">LOG DISK USAGE</div><div class="t" style="left:1363px;top:273.0px;font-size:22px;color:#212529;font-weight:bold;letter-spacing:-1.6px">1.1 GB</div><div class="abs" style="left:1617px;top:259px;width:48px;height:48px;border-radius:50%;background:#fdeccd"><svg width="48" height="48" viewBox="0 0 48 48"><rect x="16.5" y="15.5" width="15" height="17" rx="1.5" fill="none" stroke="#f7b84b" stroke-width="2.2"/><path d="M16.5 26.5h15M27 29.5h1.5" stroke="#f7b84b" stroke-width="2"/></svg></div><div class="t" style="left:1363px;top:305.0px;font-size:12px;color:#878a99;font-weight:normal;">22 categories</div><div class="card" style="left:274px;top:361px;width:458px;height:372px"></div><div class="abs" style="left:274px;top:396px;width:458px;height:1px;background:#e9ebec"></div><div class="abs" style="left:290px;top:371px;width:14px;height:14px"><svg width="13" height="13" viewBox="0 0 24 24"><path d="M12 3a9 9 0 1 0 9 9h-9z" fill="none" stroke="#f06548" stroke-width="2.4"/><path d="M15 2.5a7 7 0 0 1 6.5 6.5H15z" fill="none" stroke="#f06548" stroke-width="2.2"/></svg></div><div class="t" style="left:307px;top:370.5px;font-size:14px;color:#212529;font-weight:normal;-webkit-text-stroke:.25px #212529">Errors by Source</div><div class="abs" style="left:707px;top:373px"><svg width="6" height="8" viewBox="0 0 6 8"><path d="M1.5 1l3 3-3 3" fill="none" stroke="#878a99" stroke-width="1.2"/></svg></div><div class="t" style="left:290px;top:406.3px;font-size:13.4px;color:#212529;font-weight:normal;">backend</div><div class="t" style="right:988px;top:407.2px;font-size:11.6px;color:#878a99;font-weight:normal;">1.338.722 (99.0%)</div><div class="abs" style="left:290px;top:426px;width:426px;height:4px;background:#eff2f7;border-radius:2px"><div class="abs" style="left:0;top:0;width:422px;height:4px;background:#f06548;border-radius:2px"></div></div><div class="t" style="left:290px;top:439.3px;font-size:13.4px;color:#212529;font-weight:normal;">redis</div><div class="t" style="right:988px;top:440.2px;font-size:11.6px;color:#878a99;font-weight:normal;">10.453 (0.8%)</div><div class="abs" style="left:290px;top:459px;width:426px;height:4px;background:#eff2f7;border-radius:2px"><div class="abs" style="left:0;top:0;width:3px;height:4px;background:#299cdb;border-radius:1px"></div></div><div class="t" style="left:290px;top:472.3px;font-size:13.4px;color:#212529;font-weight:normal;">nginx-panel</div><div class="t" style="right:988px;top:473.2px;font-size:11.6px;color:#878a99;font-weight:normal;">2.032 (0.2%)</div><div class="abs" style="left:290px;top:492px;width:426px;height:4px;background:#eff2f7;border-radius:2px"><div class="abs" style="left:0;top:0;width:1px;height:4px;background:#299cdb;border-radius:1px"></div></div><div class="t" style="left:290px;top:505.3px;font-size:13.4px;color:#212529;font-weight:normal;">mysql</div><div class="t" style="right:988px;top:506.2px;font-size:11.6px;color:#878a99;font-weight:normal;">927 (0.1%)</div><div class="abs" style="left:290px;top:525px;width:426px;height:4px;background:#eff2f7;border-radius:2px"><div class="abs" style="left:0;top:0;width:1px;height:4px;background:#299cdb;border-radius:1px"></div></div><div class="t" style="left:290px;top:538.3px;font-size:13.4px;color:#212529;font-weight:normal;">proftpd</div><div class="t" style="right:988px;top:539.2px;font-size:11.6px;color:#878a99;font-weight:normal;">61 (0.0%)</div><div class="abs" style="left:290px;top:558px;width:426px;height:4px;background:#eff2f7;border-radius:2px"><div class="abs" style="left:0;top:0;width:0px;height:4px;background:#299cdb;border-radius:1px"></div></div><div class="t" style="left:290px;top:571.3px;font-size:13.4px;color:#212529;font-weight:normal;">nginx</div><div class="t" style="right:988px;top:572.2px;font-size:11.6px;color:#878a99;font-weight:normal;">0 (0.0%)</div><div class="abs" style="left:290px;top:591px;width:426px;height:4px;background:#eff2f7;border-radius:2px"><div class="abs" style="left:0;top:0;width:0px;height:4px;background:#299cdb;border-radius:1px"></div></div><div class="t" style="left:290px;top:604.3px;font-size:13.4px;color:#212529;font-weight:normal;">nginx-customer</div><div class="t" style="right:988px;top:605.2px;font-size:11.6px;color:#878a99;font-weight:normal;">0 (0.0%)</div><div class="abs" style="left:290px;top:624px;width:426px;height:4px;background:#eff2f7;border-radius:2px"><div class="abs" style="left:0;top:0;width:0px;height:4px;background:#299cdb;border-radius:1px"></div></div><div class="card" style="left:748px;top:361px;width:458px;height:372px"></div><div class="abs" style="left:748px;top:396px;width:458px;height:1px;background:#e9ebec"></div><div class="abs" style="left:764px;top:371px;width:14px;height:14px"><svg width="13" height="13" viewBox="0 0 24 24"><path d="M4 20v-6M10 20V5M16 20v-9M22 20v-4" stroke="#405189" stroke-width="2.4" stroke-linecap="round"/></svg></div><div class="t" style="left:781px;top:370.5px;font-size:14px;color:#212529;font-weight:normal;-webkit-text-stroke:.25px #212529">HTTP Overview</div><div class="abs" style="left:1181px;top:373px"><svg width="6" height="8" viewBox="0 0 6 8"><path d="M1.5 1l3 3-3 3" fill="none" stroke="#878a99" stroke-width="1.2"/></svg></div><div class="t" style="left:764px;top:407.1px;font-size:9.9px;color:#878a99;font-weight:normal;">METHODS</div><div class="bdg" style="left:764px;top:428px;width:67px;background:#0ab39c;font-size:10.5px">GET 1.430</div><div class="bdg" style="left:835px;top:428px;width:67px;background:#405189;font-size:10.5px">POST 262</div><div class="bdg" style="left:906px;top:428px;width:60px;background:#3577f1;font-size:10.5px">HEAD 67</div><div class="bdg" style="left:971px;top:428px;width:61px;background:#f06548;font-size:10.5px">DELETE 2</div><div class="bdg" style="left:1038px;top:428px;width:78px;background:#3577f1;font-size:10.5px">PROPFIND 2</div><div class="bdg" style="left:1121px;top:428px;width:59px;background:#3577f1;font-size:10.5px">PATCH 1</div><div class="t" style="left:764px;top:464.1px;font-size:9.9px;color:#878a99;font-weight:normal;">STATUS CODES</div><div class="t" style="left:772px;top:488.5px;font-size:11px;color:#0ab39c;font-weight:bold;">101: 4</div><div class="t" style="left:820px;top:488.5px;font-size:11px;color:#0ab39c;font-weight:bold;">200: 1.453</div><div class="t" style="left:894px;top:488.5px;font-size:11px;color:#0ab39c;font-weight:bold;">201: 4</div><div class="t" style="left:944px;top:488.5px;font-size:11px;color:#299cdb;font-weight:bold;">301: 40</div><div class="t" style="left:1002px;top:488.5px;font-size:11px;color:#f7b84b;font-weight:bold;">400: 21</div><div class="t" style="left:1059px;top:488.5px;font-size:11px;color:#f7b84b;font-weight:bold;">401: 2</div><div class="t" style="left:1109px;top:488.5px;font-size:11px;color:#f7b84b;font-weight:bold;">404: 4</div><div class="t" style="left:772px;top:510.5px;font-size:11px;color:#f7b84b;font-weight:bold;">405: 238</div><div class="t" style="left:764px;top:543.0px;font-size:9.9px;color:#878a99;font-weight:normal;">BANDWIDTH</div><div class="t" style="left:764px;top:564.8px;font-size:16.5px;color:#212529;font-weight:bold;">23.0 MB</div><div class="t" style="left:764px;top:602.0px;font-size:9.9px;color:#878a99;font-weight:normal;">TOP IPS</div><div class="t" style="left:764px;top:626.5px;font-size:10.1px;color:#212529;font-weight:normal;font-family:'Liberation Mono',monospace;">78.188.110.136</div><div class="t" style="right:521px;top:626.2px;font-size:10.5px;color:#212529;font-weight:normal;-webkit-text-stroke:.35px #212529">736</div><div class="t" style="left:764px;top:647.0px;font-size:10.1px;color:#212529;font-weight:normal;font-family:'Liberation Mono',monospace;">185.177.72.52</div><div class="t" style="right:521px;top:646.8px;font-size:10.5px;color:#212529;font-weight:normal;-webkit-text-stroke:.35px #212529">430</div><div class="t" style="left:764px;top:667.5px;font-size:10.1px;color:#212529;font-weight:normal;font-family:'Liberation Mono',monospace;">45.148.10.119</div><div class="t" style="right:521px;top:667.2px;font-size:10.5px;color:#212529;font-weight:normal;-webkit-text-stroke:.35px #212529">174</div><div class="t" style="left:764px;top:688.0px;font-size:10.1px;color:#212529;font-weight:normal;font-family:'Liberation Mono',monospace;">127.0.0.1</div><div class="t" style="right:521px;top:687.8px;font-size:10.5px;color:#212529;font-weight:normal;-webkit-text-stroke:.35px #212529">63</div><div class="t" style="left:764px;top:708.5px;font-size:10.1px;color:#212529;font-weight:normal;font-family:'Liberation Mono',monospace;">161.97.99.50</div><div class="t" style="right:521px;top:708.2px;font-size:10.5px;color:#212529;font-weight:normal;-webkit-text-stroke:.35px #212529">46</div><div class="card" style="left:1222px;top:361px;width:458px;height:107px"></div><div class="abs" style="left:1222px;top:396px;width:458px;height:1px;background:#e9ebec"></div><div class="abs" style="left:1238px;top:371px;width:14px;height:14px"><svg width="14" height="14" viewBox="0 0 24 24"><path d="M20.5 12a8.5 8.5 0 0 1-15 5.5M3.5 12a8.5 8.5 0 0 1 15-5.5" fill="none" stroke="#299cdb" stroke-width="2.4"/><path d="M19 3v4h-4M5 21v-4h4" fill="none" stroke="#299cdb" stroke-width="2.2"/></svg></div><div class="t" style="left:1255px;top:370.5px;font-size:14px;color:#212529;font-weight:normal;-webkit-text-stroke:.25px #212529">Logrotate Status</div><div class="abs" style="left:1655px;top:373px"><svg width="6" height="8" viewBox="0 0 6 8"><path d="M1.5 1l3 3-3 3" fill="none" stroke="#878a99" stroke-width="1.2"/></svg></div><div class="abs" style="left:1238px;top:405px;width:136px;height:55px;background:#f3f3f9;border-radius:4px"></div><div class="t" style="left:1306.0px;transform:translateX(-50%);top:414.5px;font-size:16px;color:#212529;font-weight:bold;">13</div><div class="t" style="left:1306.0px;transform:translateX(-50%);top:436.5px;font-size:11px;color:#878a99;font-weight:normal;">total</div><div class="abs" style="left:1383px;top:405px;width:135px;height:55px;background:#f3f3f9;border-radius:4px"></div><div class="t" style="left:1450.5px;transform:translateX(-50%);top:414.5px;font-size:16px;color:#0ab39c;font-weight:bold;">4</div><div class="t" style="left:1450.5px;transform:translateX(-50%);top:436.5px;font-size:11px;color:#878a99;font-weight:normal;">Active</div><div class="abs" style="left:1527px;top:405px;width:136px;height:55px;background:#f3f3f9;border-radius:4px"></div><div class="t" style="left:1595.0px;transform:translateX(-50%);top:414.5px;font-size:16px;color:#f7b84b;font-weight:bold;">9</div><div class="t" style="left:1595.0px;transform:translateX(-50%);top:436.5px;font-size:11px;color:#878a99;font-weight:normal;">No Rotation</div><div class="card" style="left:1222px;top:484px;width:458px;height:249px;overflow:hidden"><div class="abs" style="left:0;top:0;width:458px;height:31px;background:#fcd9d2"></div></div><div class="abs" style="left:1238px;top:492px"><svg width="14" height="14" viewBox="0 0 24 24" fill="none" stroke="#f06548" stroke-width="2.2"><path d="M8 8h8v7a4 4 0 0 1-8 0z"/><path d="M9 8a3 3 0 0 1 6 0M3 12h5M16 12h5M4 7l4 2M20 7l-4 2M4 19l4-2M20 19l-4-2M12 11v7"/></svg></div><div class="t" style="left:1255px;top:492.5px;font-size:14px;color:#f06548;font-weight:normal;-webkit-text-stroke:.25px #f06548">Last Error</div><div class="bdg" style="left:1238px;top:527px;width:37px;height:15px;line-height:15px;background:#f06548;font-size:10px">error</div><div class="bdg" style="left:1280px;top:527px;width:75px;height:15px;line-height:15px;background:#e5e7eb;color:#3577f1;font-size:10.5px">nginx-panel</div><div class="t" style="left:1238px;top:555.5px;font-size:10.1px;color:#212529;font-weight:normal;font-family:'Liberation Mono',monospace;">2026/03/09 12:23:49 [error] 862850#0: *26961 connect() failed (111:</div><div class="t" style="left:1238px;top:572.0px;font-size:10.1px;color:#212529;font-weight:normal;font-family:'Liberation Mono',monospace;">Connection refused) while connecting to upstream, client:</div><div class="t" style="left:1238px;top:588.5px;font-size:10.1px;color:#212529;font-weight:normal;font-family:'Liberation Mono',monospace;">78.188.110.136, server: _, request: &quot;GET /api/v1/public/settings…</div><div class="t" style="left:1238px;top:611.4px;font-size:9.3px;color:#878a99;font-weight:normal;">01.01.1 01:55:52</div><div class="card" style="left:274px;top:737px;width:1406px;height:691px"></div><div class="abs" style="left:291px;top:747px"><svg width="11" height="13" viewBox="0 0 11 13"><rect x="1" y="1" width="9" height="11" rx="1" fill="none" stroke="#f7b84b" stroke-width="1.4"/><path d="M1 8.5h9" stroke="#f7b84b" stroke-width="1.3"/></svg></div><div class="t" style="left:307px;top:746.2px;font-size:14.6px;color:#212529;font-weight:normal;-webkit-text-stroke:.25px #212529">Storage by Category</div><div class="t" style="right:40px;top:747.9px;font-size:11.2px;color:#878a99;font-weight:normal;">1.1 GB total</div><div class="abs" style="left:274px;top:770px;width:1406px;height:29px;background:#f3f3f9;border-top:1px solid #e9ebec;border-bottom:1px solid #e9ebec"></div><div class="t" style="left:290px;top:778.5px;font-size:13px;color:#212529;font-weight:bold;">Category</div><div class="t" style="right:729px;top:778.5px;font-size:13px;color:#212529;font-weight:bold;">Size</div><div class="t" style="left:1030px;transform:translateX(-50%);top:778.5px;font-size:13px;color:#212529;font-weight:bold;">Files</div><div class="t" style="left:1170px;transform:translateX(-50%);top:778.5px;font-size:13px;color:#212529;font-weight:bold;">Rotation</div><div class="t" style="left:1262px;top:778.5px;font-size:13px;color:#212529;font-weight:bold;">Usage</div><div class="abs" style="left:274px;top:827px;width:1406px;height:1px;background:#e9ebec"></div><div class="t" style="left:290px;top:807.1px;font-size:13.4px;color:#212529;font-weight:normal;-webkit-text-stroke:.2px #212529">System Log (syslog)</div><div class="t" style="right:729px;top:807.5px;font-size:12.5px;color:#212529;font-weight:normal;-webkit-text-stroke:.2px #212529">449.2 MB</div><div class="abs" style="left:1021.5px;top:805.3px;width:18px;height:17px;background:#e7e9ee;border-radius:4px;color:#3577f1;font-size:11px;font-weight:bold;text-align:center;line-height:17px">2</div><div class="t" style="left:1170px;transform:translateX(-50%);top:808.7px;font-size:10.8px;color:#0ab39c;font-weight:normal;-webkit-text-stroke:.45px #0ab39c">daily</div><div class="abs" style="left:1262px;top:811.3px;width:370px;height:4px;background:#eff2f7;border-radius:2px"><div class="abs" style="left:0;top:0;width:142.8px;height:4px;background:#f7b84b;border-radius:2px"></div></div><div class="t" style="left:1641px;top:808.5px;font-size:9.6px;color:#878a99;font-weight:normal;">38.6%</div><div class="abs" style="left:274px;top:856px;width:1406px;height:1px;background:#e9ebec"></div><div class="t" style="left:290px;top:835.7px;font-size:13.4px;color:#212529;font-weight:normal;-webkit-text-stroke:.2px #212529">Kernel Log</div><div class="t" style="right:729px;top:836.1px;font-size:12.5px;color:#212529;font-weight:normal;-webkit-text-stroke:.2px #212529">264.5 MB</div><div class="abs" style="left:1021.5px;top:833.9px;width:18px;height:17px;background:#e7e9ee;border-radius:4px;color:#3577f1;font-size:11px;font-weight:bold;text-align:center;line-height:17px">2</div><div class="t" style="left:1170px;transform:translateX(-50%);top:837.3px;font-size:10.8px;color:#0ab39c;font-weight:normal;-webkit-text-stroke:.45px #0ab39c">daily</div><div class="abs" style="left:1262px;top:839.9px;width:370px;height:4px;background:#eff2f7;border-radius:2px"><div class="abs" style="left:0;top:0;width:84.0px;height:4px;background:#f7b84b;border-radius:2px"></div></div><div class="t" style="left:1641px;top:837.1px;font-size:9.6px;color:#878a99;font-weight:normal;">22.7%</div><div class="abs" style="left:274px;top:884px;width:1406px;height:1px;background:#e9ebec"></div><div class="t" style="left:290px;top:864.3px;font-size:13.4px;color:#212529;font-weight:normal;-webkit-text-stroke:.2px #212529">Backend API</div><div class="t" style="right:729px;top:864.8px;font-size:12.5px;color:#212529;font-weight:normal;-webkit-text-stroke:.2px #212529">165.1 MB</div><div class="abs" style="left:1021.5px;top:862.5px;width:18px;height:17px;background:#e7e9ee;border-radius:4px;color:#3577f1;font-size:11px;font-weight:bold;text-align:center;line-height:17px">1</div><div class="t" style="left:1170px;transform:translateX(-50%);top:865.9px;font-size:10.8px;color:#f7b84b;font-weight:normal;-webkit-text-stroke:.45px #f7b84b">none</div><div class="abs" style="left:1262px;top:868.5px;width:370px;height:4px;background:#eff2f7;border-radius:2px"><div class="abs" style="left:0;top:0;width:52.5px;height:4px;background:#0ab39c;border-radius:2px"></div></div><div class="t" style="left:1641px;top:865.7px;font-size:9.6px;color:#878a99;font-weight:normal;">14.2%</div><div class="abs" style="left:274px;top:913px;width:1406px;height:1px;background:#e9ebec"></div><div class="t" style="left:290px;top:892.9px;font-size:13.4px;color:#212529;font-weight:normal;-webkit-text-stroke:.2px #212529">Mail Log</div><div class="t" style="right:729px;top:893.3px;font-size:12.5px;color:#212529;font-weight:normal;-webkit-text-stroke:.2px #212529">71.4 MB</div><div class="abs" style="left:1021.5px;top:891.1px;width:18px;height:17px;background:#e7e9ee;border-radius:4px;color:#3577f1;font-size:11px;font-weight:bold;text-align:center;line-height:17px">2</div><div class="t" style="left:1170px;transform:translateX(-50%);top:894.5px;font-size:10.8px;color:#0ab39c;font-weight:normal;-webkit-text-stroke:.45px #0ab39c">daily</div><div class="abs" style="left:1262px;top:897.1px;width:370px;height:4px;background:#eff2f7;border-radius:2px"><div class="abs" style="left:0;top:0;width:22.6px;height:4px;background:#0ab39c;border-radius:2px"></div></div><div class="t" style="left:1641px;top:894.3px;font-size:9.6px;color:#878a99;font-weight:normal;">6.1%</div><div class="abs" style="left:274px;top:942px;width:1406px;height:1px;background:#e9ebec"></div><div class="t" style="left:290px;top:921.5px;font-size:13.4px;color:#212529;font-weight:normal;-webkit-text-stroke:.2px #212529">Bandwidth Tracking</div><div class="t" style="right:729px;top:921.9px;font-size:12.5px;color:#212529;font-weight:normal;-webkit-text-stroke:.2px #212529">61.9 MB</div><div class="abs" style="left:1021.5px;top:919.7px;width:18px;height:17px;background:#e7e9ee;border-radius:4px;color:#3577f1;font-size:11px;font-weight:bold;text-align:center;line-height:17px">1</div><div class="t" style="left:1170px;transform:translateX(-50%);top:923.1px;font-size:10.8px;color:#f7b84b;font-weight:normal;-webkit-text-stroke:.45px #f7b84b">none</div><div class="abs" style="left:1262px;top:925.7px;width:370px;height:4px;background:#eff2f7;border-radius:2px"><div class="abs" style="left:0;top:0;width:19.6px;height:4px;background:#0ab39c;border-radius:2px"></div></div><div class="t" style="left:1641px;top:922.9px;font-size:9.6px;color:#878a99;font-weight:normal;">5.3%</div><div class="abs" style="left:274px;top:970px;width:1406px;height:1px;background:#e9ebec"></div><div class="t" style="left:290px;top:950.1px;font-size:13.4px;color:#212529;font-weight:normal;-webkit-text-stroke:.2px #212529">PHP-FPM</div><div class="t" style="right:729px;top:950.5px;font-size:12.5px;color:#212529;font-weight:normal;-webkit-text-stroke:.2px #212529">39.8 MB</div><div class="abs" style="left:1018.0px;top:948.3px;width:25px;height:17px;background:#e7e9ee;border-radius:4px;color:#3577f1;font-size:11px;font-weight:bold;text-align:center;line-height:17px">43</div><div class="t" style="left:1170px;transform:translateX(-50%);top:951.7px;font-size:10.8px;color:#f7b84b;font-weight:normal;-webkit-text-stroke:.45px #f7b84b">none</div><div class="abs" style="left:1262px;top:954.3px;width:370px;height:4px;background:#eff2f7;border-radius:2px"><div class="abs" style="left:0;top:0;width:12.6px;height:4px;background:#0ab39c;border-radius:2px"></div></div><div class="t" style="left:1641px;top:951.5px;font-size:9.6px;color:#878a99;font-weight:normal;">3.4%</div><div class="abs" style="left:274px;top:999px;width:1406px;height:1px;background:#e9ebec"></div><div class="t" style="left:290px;top:978.7px;font-size:13.4px;color:#212529;font-weight:normal;-webkit-text-stroke:.2px #212529">Apache/ModSecurity</div><div class="t" style="right:729px;top:979.1px;font-size:12.5px;color:#212529;font-weight:normal;-webkit-text-stroke:.2px #212529">36.5 MB</div><div class="abs" style="left:1021.5px;top:976.9px;width:18px;height:17px;background:#e7e9ee;border-radius:4px;color:#3577f1;font-size:11px;font-weight:bold;text-align:center;line-height:17px">2</div><div class="t" style="left:1170px;transform:translateX(-50%);top:980.3px;font-size:10.8px;color:#f7b84b;font-weight:normal;-webkit-text-stroke:.45px #f7b84b">none</div><div class="abs" style="left:1262px;top:982.9px;width:370px;height:4px;background:#eff2f7;border-radius:2px"><div class="abs" style="left:0;top:0;width:11.5px;height:4px;background:#0ab39c;border-radius:2px"></div></div><div class="t" style="left:1641px;top:980.1px;font-size:9.6px;color:#878a99;font-weight:normal;">3.1%</div><div class="abs" style="left:274px;top:1027px;width:1406px;height:1px;background:#e9ebec"></div><div class="t" style="left:290px;top:1007.3px;font-size:13.4px;color:#212529;font-weight:normal;-webkit-text-stroke:.2px #212529">ClamAV Antivirus</div><div class="t" style="right:729px;top:1007.8px;font-size:12.5px;color:#212529;font-weight:normal;-webkit-text-stroke:.2px #212529">32.3 MB</div><div class="abs" style="left:1021.5px;top:1005.5px;width:18px;height:17px;background:#e7e9ee;border-radius:4px;color:#3577f1;font-size:11px;font-weight:bold;text-align:center;line-height:17px">1</div><div class="t" style="left:1170px;transform:translateX(-50%);top:1008.9px;font-size:10.8px;color:#f7b84b;font-weight:normal;-webkit-text-stroke:.45px #f7b84b">none</div><div class="abs" style="left:1262px;top:1011.5px;width:370px;height:4px;background:#eff2f7;border-radius:2px"><div class="abs" style="left:0;top:0;width:10.4px;height:4px;background:#0ab39c;border-radius:2px"></div></div><div class="t" style="left:1641px;top:1008.7px;font-size:9.6px;color:#878a99;font-weight:normal;">2.8%</div><div class="abs" style="left:274px;top:1056px;width:1406px;height:1px;background:#e9ebec"></div><div class="t" style="left:290px;top:1035.9px;font-size:13.4px;color:#212529;font-weight:normal;-webkit-text-stroke:.2px #212529">Nginx Panel</div><div class="t" style="right:729px;top:1036.3px;font-size:12.5px;color:#212529;font-weight:normal;-webkit-text-stroke:.2px #212529">20.7 MB</div><div class="abs" style="left:1021.5px;top:1034.1px;width:18px;height:17px;background:#e7e9ee;border-radius:4px;color:#3577f1;font-size:11px;font-weight:bold;text-align:center;line-height:17px">2</div><div class="t" style="left:1170px;transform:translateX(-50%);top:1037.5px;font-size:10.8px;color:#f7b84b;font-weight:normal;-webkit-text-stroke:.45px #f7b84b">none</div><div class="abs" style="left:1262px;top:1040.1px;width:370px;height:4px;background:#eff2f7;border-radius:2px"><div class="abs" style="left:0;top:0;width:6.7px;height:4px;background:#0ab39c;border-radius:2px"></div></div><div class="t" style="left:1641px;top:1037.3px;font-size:9.6px;color:#878a99;font-weight:normal;">1.8%</div><div class="abs" style="left:274px;top:1085px;width:1406px;height:1px;background:#e9ebec"></div><div class="t" style="left:290px;top:1064.5px;font-size:13.4px;color:#212529;font-weight:normal;-webkit-text-stroke:.2px #212529">Auth Log</div><div class="t" style="right:729px;top:1065.0px;font-size:12.5px;color:#212529;font-weight:normal;-webkit-text-stroke:.2px #212529">8.8 MB</div><div class="abs" style="left:1021.5px;top:1062.7px;width:18px;height:17px;background:#e7e9ee;border-radius:4px;color:#3577f1;font-size:11px;font-weight:bold;text-align:center;line-height:17px">2</div><div class="t" style="left:1170px;transform:translateX(-50%);top:1066.1px;font-size:10.8px;color:#0ab39c;font-weight:normal;-webkit-text-stroke:.45px #0ab39c">weekly</div><div class="abs" style="left:1262px;top:1068.7px;width:370px;height:4px;background:#eff2f7;border-radius:2px"><div class="abs" style="left:0;top:0;width:3.0px;height:4px;background:#0ab39c;border-radius:2px"></div></div><div class="t" style="left:1641px;top:1065.9px;font-size:9.6px;color:#878a99;font-weight:normal;">0.8%</div><div class="abs" style="left:274px;top:1113px;width:1406px;height:1px;background:#e9ebec"></div><div class="t" style="left:290px;top:1093.1px;font-size:13.4px;color:#212529;font-weight:normal;-webkit-text-stroke:.2px #212529">Cron Scheduler</div><div class="t" style="right:729px;top:1093.5px;font-size:12.5px;color:#212529;font-weight:normal;-webkit-text-stroke:.2px #212529">4.0 MB</div><div class="abs" style="left:1021.5px;top:1091.3px;width:18px;height:17px;background:#e7e9ee;border-radius:4px;color:#3577f1;font-size:11px;font-weight:bold;text-align:center;line-height:17px">1</div><div class="t" style="left:1170px;transform:translateX(-50%);top:1094.7px;font-size:10.8px;color:#f7b84b;font-weight:normal;-webkit-text-stroke:.45px #f7b84b">none</div><div class="abs" style="left:1262px;top:1097.3px;width:370px;height:4px;background:#eff2f7;border-radius:2px"><div class="abs" style="left:0;top:0;width:1.1px;height:4px;background:#0ab39c;border-radius:2px"></div></div><div class="t" style="left:1641px;top:1094.5px;font-size:9.6px;color:#878a99;font-weight:normal;">0.3%</div><div class="abs" style="left:274px;top:1142px;width:1406px;height:1px;background:#e9ebec"></div><div class="t" style="left:290px;top:1121.7px;font-size:13.4px;color:#212529;font-weight:normal;-webkit-text-stroke:.2px #212529">Nginx Customer</div><div class="t" style="right:729px;top:1122.1px;font-size:12.5px;color:#212529;font-weight:normal;-webkit-text-stroke:.2px #212529">2.7 MB</div><div class="abs" style="left:1021.5px;top:1119.9px;width:18px;height:17px;background:#e7e9ee;border-radius:4px;color:#3577f1;font-size:11px;font-weight:bold;text-align:center;line-height:17px">4</div><div class="t" style="left:1170px;transform:translateX(-50%);top:1123.3px;font-size:10.8px;color:#f7b84b;font-weight:normal;-webkit-text-stroke:.45px #f7b84b">none</div><div class="abs" style="left:1262px;top:1125.9px;width:370px;height:4px;background:#eff2f7;border-radius:2px"><div class="abs" style="left:0;top:0;width:1.0px;height:4px;background:#0ab39c;border-radius:2px"></div></div><div class="t" style="left:1641px;top:1123.1px;font-size:9.6px;color:#878a99;font-weight:normal;">0.2%</div><div class="abs" style="left:274px;top:1170px;width:1406px;height:1px;background:#e9ebec"></div><div class="t" style="left:290px;top:1150.3px;font-size:13.4px;color:#212529;font-weight:normal;-webkit-text-stroke:.2px #212529">PostgreSQL</div><div class="t" style="right:729px;top:1150.8px;font-size:12.5px;color:#212529;font-weight:normal;-webkit-text-stroke:.2px #212529">2.1 MB</div><div class="abs" style="left:1021.5px;top:1148.5px;width:18px;height:17px;background:#e7e9ee;border-radius:4px;color:#3577f1;font-size:11px;font-weight:bold;text-align:center;line-height:17px">8</div><div class="t" style="left:1170px;transform:translateX(-50%);top:1151.9px;font-size:10.8px;color:#f7b84b;font-weight:normal;-webkit-text-stroke:.45px #f7b84b">none</div><div class="abs" style="left:1262px;top:1154.5px;width:370px;height:4px;background:#eff2f7;border-radius:2px"><div class="abs" style="left:0;top:0;width:1.0px;height:4px;background:#0ab39c;border-radius:2px"></div></div><div class="t" style="left:1641px;top:1151.7px;font-size:9.6px;color:#878a99;font-weight:normal;">0.2%</div><div class="abs" style="left:274px;top:1199px;width:1406px;height:1px;background:#e9ebec"></div><div class="t" style="left:290px;top:1178.9px;font-size:13.4px;color:#212529;font-weight:normal;-webkit-text-stroke:.2px #212529">ProFTPD</div><div class="t" style="right:729px;top:1179.3px;font-size:12.5px;color:#212529;font-weight:normal;-webkit-text-stroke:.2px #212529">1.8 MB</div><div class="abs" style="left:1021.5px;top:1177.1px;width:18px;height:17px;background:#e7e9ee;border-radius:4px;color:#3577f1;font-size:11px;font-weight:bold;text-align:center;line-height:17px">2</div><div class="t" style="left:1170px;transform:translateX(-50%);top:1180.5px;font-size:10.8px;color:#f7b84b;font-weight:normal;-webkit-text-stroke:.45px #f7b84b">none</div><div class="abs" style="left:1262px;top:1183.1px;width:370px;height:4px;background:#eff2f7;border-radius:2px"><div class="abs" style="left:0;top:0;width:1.0px;height:4px;background:#0ab39c;border-radius:2px"></div></div><div class="t" style="left:1641px;top:1180.3px;font-size:9.6px;color:#878a99;font-weight:normal;">0.2%</div><div class="abs" style="left:274px;top:1228px;width:1406px;height:1px;background:#e9ebec"></div><div class="t" style="left:290px;top:1207.5px;font-size:13.4px;color:#212529;font-weight:normal;-webkit-text-stroke:.2px #212529">Resource Alerts</div><div class="t" style="right:729px;top:1208.0px;font-size:12.5px;color:#212529;font-weight:normal;-webkit-text-stroke:.2px #212529">1.3 MB</div><div class="abs" style="left:1021.5px;top:1205.7px;width:18px;height:17px;background:#e7e9ee;border-radius:4px;color:#3577f1;font-size:11px;font-weight:bold;text-align:center;line-height:17px">2</div><div class="t" style="left:1170px;transform:translateX(-50%);top:1209.1px;font-size:10.8px;color:#f7b84b;font-weight:normal;-webkit-text-stroke:.45px #f7b84b">none</div><div class="abs" style="left:1262px;top:1211.7px;width:370px;height:4px;background:#eff2f7;border-radius:2px"><div class="abs" style="left:0;top:0;width:1.0px;height:4px;background:#0ab39c;border-radius:2px"></div></div><div class="t" style="left:1641px;top:1208.9px;font-size:9.6px;color:#878a99;font-weight:normal;">0.1%</div><div class="abs" style="left:274px;top:1256px;width:1406px;height:1px;background:#e9ebec"></div><div class="t" style="left:290px;top:1236.1px;font-size:13.4px;color:#212529;font-weight:normal;-webkit-text-stroke:.2px #212529">Redis</div><div class="t" style="right:729px;top:1236.5px;font-size:12.5px;color:#212529;font-weight:normal;-webkit-text-stroke:.2px #212529">803.8 KB</div><div class="abs" style="left:1021.5px;top:1234.3px;width:18px;height:17px;background:#e7e9ee;border-radius:4px;color:#3577f1;font-size:11px;font-weight:bold;text-align:center;line-height:17px">1</div><div class="t" style="left:1170px;transform:translateX(-50%);top:1237.7px;font-size:10.8px;color:#f7b84b;font-weight:normal;-webkit-text-stroke:.45px #f7b84b">none</div><div class="abs" style="left:1262px;top:1240.3px;width:370px;height:4px;background:#eff2f7;border-radius:2px"><div class="abs" style="left:0;top:0;width:1.0px;height:4px;background:#0ab39c;border-radius:2px"></div></div><div class="t" style="left:1641px;top:1237.5px;font-size:9.6px;color:#878a99;font-weight:normal;">0.1%</div><div class="abs" style="left:274px;top:1285px;width:1406px;height:1px;background:#e9ebec"></div><div class="t" style="left:290px;top:1264.7px;font-size:13.4px;color:#212529;font-weight:normal;-webkit-text-stroke:.2px #212529">Fail2ban</div><div class="t" style="right:729px;top:1265.1px;font-size:12.5px;color:#212529;font-weight:normal;-webkit-text-stroke:.2px #212529">619.7 KB</div><div class="abs" style="left:1021.5px;top:1262.9px;width:18px;height:17px;background:#e7e9ee;border-radius:4px;color:#3577f1;font-size:11px;font-weight:bold;text-align:center;line-height:17px">2</div><div class="t" style="left:1170px;transform:translateX(-50%);top:1266.3px;font-size:10.8px;color:#0ab39c;font-weight:normal;-webkit-text-stroke:.45px #0ab39c">daily</div><div class="abs" style="left:1262px;top:1268.9px;width:370px;height:4px;background:#eff2f7;border-radius:2px"><div class="abs" style="left:0;top:0;width:1.0px;height:4px;background:#0ab39c;border-radius:2px"></div></div><div class="t" style="left:1641px;top:1266.1px;font-size:9.6px;color:#878a99;font-weight:normal;">0.1%</div><div class="abs" style="left:274px;top:1313px;width:1406px;height:1px;background:#e9ebec"></div><div class="t" style="left:290px;top:1293.3px;font-size:13.4px;color:#212529;font-weight:normal;-webkit-text-stroke:.2px #212529">Package Manager (dpkg)</div><div class="t" style="right:729px;top:1293.8px;font-size:12.5px;color:#212529;font-weight:normal;-webkit-text-stroke:.2px #212529">518.5 KB</div><div class="abs" style="left:1021.5px;top:1291.5px;width:18px;height:17px;background:#e7e9ee;border-radius:4px;color:#3577f1;font-size:11px;font-weight:bold;text-align:center;line-height:17px">1</div><div class="t" style="left:1170px;transform:translateX(-50%);top:1294.9px;font-size:10.8px;color:#0ab39c;font-weight:normal;-webkit-text-stroke:.45px #0ab39c">daily</div><div class="abs" style="left:1262px;top:1297.5px;width:370px;height:4px;background:#eff2f7;border-radius:2px"><div class="abs" style="left:0;top:0;width:1.0px;height:4px;background:#0ab39c;border-radius:2px"></div></div><div class="t" style="left:1641px;top:1294.7px;font-size:9.6px;color:#878a99;font-weight:normal;">0.0%</div><div class="abs" style="left:274px;top:1342px;width:1406px;height:1px;background:#e9ebec"></div><div class="t" style="left:290px;top:1321.9px;font-size:13.4px;color:#212529;font-weight:normal;-webkit-text-stroke:.2px #212529">Dovecot Mail</div><div class="t" style="right:729px;top:1322.4px;font-size:12.5px;color:#212529;font-weight:normal;-webkit-text-stroke:.2px #212529">371.5 KB</div><div class="abs" style="left:1021.5px;top:1320.1px;width:18px;height:17px;background:#e7e9ee;border-radius:4px;color:#3577f1;font-size:11px;font-weight:bold;text-align:center;line-height:17px">3</div><div class="t" style="left:1170px;transform:translateX(-50%);top:1323.5px;font-size:10.8px;color:#f7b84b;font-weight:normal;-webkit-text-stroke:.45px #f7b84b">none</div><div class="abs" style="left:1262px;top:1326.1px;width:370px;height:4px;background:#eff2f7;border-radius:2px"><div class="abs" style="left:0;top:0;width:1.0px;height:4px;background:#0ab39c;border-radius:2px"></div></div><div class="t" style="left:1641px;top:1323.3px;font-size:9.6px;color:#878a99;font-weight:normal;">0.0%</div><div class="abs" style="left:274px;top:1371px;width:1406px;height:1px;background:#e9ebec"></div><div class="t" style="left:290px;top:1350.5px;font-size:13.4px;color:#212529;font-weight:normal;-webkit-text-stroke:.2px #212529">MySQL Binlogs</div><div class="t" style="right:729px;top:1351.0px;font-size:12.5px;color:#212529;font-weight:normal;-webkit-text-stroke:.2px #212529">257.8 KB</div><div class="abs" style="left:1021.5px;top:1348.7px;width:18px;height:17px;background:#e7e9ee;border-radius:4px;color:#3577f1;font-size:11px;font-weight:bold;text-align:center;line-height:17px">2</div><div class="t" style="left:1170px;transform:translateX(-50%);top:1352.1px;font-size:10.8px;color:#f7b84b;font-weight:normal;-webkit-text-stroke:.45px #f7b84b">none</div><div class="abs" style="left:1262px;top:1354.7px;width:370px;height:4px;background:#eff2f7;border-radius:2px"><div class="abs" style="left:0;top:0;width:1.0px;height:4px;background:#0ab39c;border-radius:2px"></div></div><div class="t" style="left:1641px;top:1351.9px;font-size:9.6px;color:#878a99;font-weight:normal;">0.0%</div><div class="abs" style="left:274px;top:1399px;width:1406px;height:1px;background:#e9ebec"></div><div class="t" style="left:290px;top:1379.1px;font-size:13.4px;color:#212529;font-weight:normal;-webkit-text-stroke:.2px #212529">External API</div><div class="t" style="right:729px;top:1379.5px;font-size:12.5px;color:#212529;font-weight:normal;-webkit-text-stroke:.2px #212529">135.1 KB</div><div class="abs" style="left:1021.5px;top:1377.3px;width:18px;height:17px;background:#e7e9ee;border-radius:4px;color:#3577f1;font-size:11px;font-weight:bold;text-align:center;line-height:17px">1</div><div class="t" style="left:1170px;transform:translateX(-50%);top:1380.7px;font-size:10.8px;color:#f7b84b;font-weight:normal;-webkit-text-stroke:.45px #f7b84b">none</div><div class="abs" style="left:1262px;top:1383.3px;width:370px;height:4px;background:#eff2f7;border-radius:2px"><div class="abs" style="left:0;top:0;width:0.0px;height:4px;background:#0ab39c;border-radius:2px"></div></div><div class="t" style="left:1641px;top:1380.5px;font-size:9.6px;color:#878a99;font-weight:normal;">0.0%</div><div class="t" style="left:290px;top:1407.7px;font-size:13.4px;color:#212529;font-weight:normal;-webkit-text-stroke:.2px #212529">Nginx Default</div><div class="t" style="right:729px;top:1408.1px;font-size:12.5px;color:#212529;font-weight:normal;-webkit-text-stroke:.2px #212529">0 B</div><div class="abs" style="left:1021.5px;top:1405.9px;width:18px;height:17px;background:#e7e9ee;border-radius:4px;color:#3577f1;font-size:11px;font-weight:bold;text-align:center;line-height:17px">4</div><div class="t" style="left:1170px;transform:translateX(-50%);top:1409.3px;font-size:10.8px;color:#f7b84b;font-weight:normal;-webkit-text-stroke:.45px #f7b84b">none</div><div class="abs" style="left:1262px;top:1411.9px;width:370px;height:4px;background:#eff2f7;border-radius:2px"><div class="abs" style="left:0;top:0;width:0.0px;height:4px;background:#0ab39c;border-radius:2px"></div></div><div class="t" style="left:1641px;top:1409.1px;font-size:9.6px;color:#878a99;font-weight:normal;">0.0%</div><div class="abs" style="left:250px;top:1513px;width:1439px;height:60px;background:#fff"></div><div class="t" style="left:274px;top:1535.5px;font-size:13px;color:#98a6ad;font-weight:normal;">2026 © PANELICA.</div><div class="t" style="right:39px;top:1534.9px;font-size:14.2px;color:#98a6ad;font-weight:normal;">Powered by Panelica</div><div class="abs" style="left:1639px;top:1436px;width:37px;height:37px;background:#f06548;border-radius:4px"><svg width="37" height="37" viewBox="0 0 37 37"><path d="M18.5 22.5V14.5M15 18l3.5-3.5L22 18" fill="none" stroke="#fff" stroke-width="1.6" stroke-linecap="round"/></svg></div><div class="abs" style="left:1635px;top:1484px;width:49px;height:49px;border-radius:50%;background:#299cdb;box-shadow:0 4px 10px rgba(0,0,0,.12)"><svg width="49" height="49" viewBox="0 0 49 49"><g transform="translate(24.5 24.5)" fill="none" stroke="#fff" stroke-width="2"><circle r="3"/><path d="M0 -9.5l2.3 2.6 3.4-.6.9 3.3 3.1 1.3-1.1 3 1.1 3-3.1 1.3-.9 3.3-3.4-.6L0 9.5l-2.3-2.6-3.4.6-.9-3.3-3.1-1.3 1.1-3-1.1-3 3.1-1.3.9-3.3 3.4.6z"/></g></svg></div></body></html>
